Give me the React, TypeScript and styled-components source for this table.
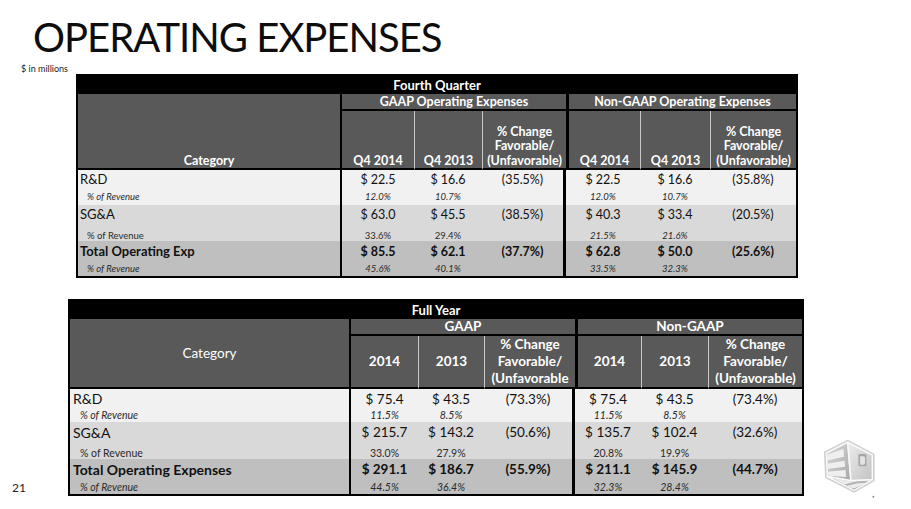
import React from "react";
import styled, { createGlobalStyle, css } from "styled-components";

const GlobalStyle = createGlobalStyle`
  html, body {
    margin: 0;
    padding: 0;
    background: #ffffff;
  }
  body {
    font-family: Lato, "Open Sans", "Liberation Sans", sans-serif;
    color: #111111;
  }
`;

type Tone = "light" | "mid" | "dark";

interface RowData {
  label: string;
  bold?: boolean;
  tone: Tone;
  values: string[]; // 6 values: gaap a, b, pct, non-gaap a, b, pct
  sub: string[]; // 4 values
  subItalic: [boolean, boolean]; // gaap / non-gaap
  labelItalic: boolean;
  heights: [number, number];
  subAlign?: "middle" | "bottom";
}

interface TableData {
  band: string;
  groups: [string, string];
  cols: React.ReactNode[];
  catBold: boolean;
  headAlign: "bottom" | "middle";
  headSize: number;
  headLine: number;
  widths: number[];
  headHeight: number;
  rows: RowData[];
  labelPad: number;
  subIndent: number;
  mainSize: number;
  subSize: number;
}

const pctHead = (close: boolean) => (
  <>
    % Change
    <br />
    Favorable/
    <br />
    (Unfavorable{close ? ")" : ""}
  </>
);

const quarter: TableData = {
  band: "Fourth Quarter",
  groups: ["GAAP Operating Expenses", "Non-GAAP Operating Expenses"],
  cols: ["Q4 2014", "Q4 2013", pctHead(true), "Q4 2014", "Q4 2013", pctHead(true)],
  catBold: true,
  headAlign: "bottom",
  headSize: 12.5,
  headLine: 14.5,
  widths: [264, 72, 68, 84, 74, 70, 86],
  headHeight: 59,
  labelPad: 2,
  subIndent: 9,
  mainSize: 12.5,
  subSize: 9.5,
  rows: [
    {
      label: "R&D",
      tone: "light",
      values: ["$ 22.5", "$ 16.6", "(35.5%)", "$ 22.5", "$ 16.6", "(35.8%)"],
      sub: ["12.0%", "10.7%", "12.0%", "10.7%"],
      subItalic: [true, true],
      labelItalic: true,
      heights: [18, 17],
    },
    {
      label: "SG&A",
      tone: "mid",
      values: ["$ 63.0", "$ 45.5", "(38.5%)", "$ 40.3", "$ 33.4", "(20.5%)"],
      sub: ["33.6%", "29.4%", "21.5%", "21.6%"],
      subItalic: [false, true],
      labelItalic: false,
      heights: [18, 18],
      subAlign: "bottom",
    },
    {
      label: "Total Operating Exp",
      bold: true,
      tone: "dark",
      values: ["$ 85.5", "$ 62.1", "(37.7%)", "$ 62.8", "$ 50.0", "(25.6%)"],
      sub: ["45.6%", "40.1%", "33.5%", "32.3%"],
      subItalic: [true, true],
      labelItalic: true,
      heights: [20, 15],
    },
  ],
};

const fullYear: TableData = {
  band: "Full Year",
  groups: ["GAAP", "Non-GAAP"],
  cols: ["2014", "2013", pctHead(false), "2014", "2013", pctHead(true)],
  catBold: false,
  headAlign: "middle",
  headSize: 13.5,
  headLine: 17,
  widths: [281, 67, 66, 91, 66, 67, 94],
  headHeight: 53,
  labelPad: 3,
  subIndent: 10,
  mainSize: 13.5,
  subSize: 10.5,
  rows: [
    {
      label: "R&D",
      tone: "light",
      values: ["$ 75.4", "$ 43.5", "(73.3%)", "$ 75.4", "$ 43.5", "(73.4%)"],
      sub: ["11.5%", "8.5%", "11.5%", "8.5%"],
      subItalic: [true, true],
      labelItalic: true,
      heights: [19, 14],
    },
    {
      label: "SG&A",
      tone: "mid",
      values: ["$ 215.7", "$ 143.2", "(50.6%)", "$ 135.7", "$ 102.4", "(32.6%)"],
      sub: ["33.0%", "27.9%", "20.8%", "19.9%"],
      subItalic: [false, false],
      labelItalic: false,
      heights: [20, 17],
      subAlign: "bottom",
    },
    {
      label: "Total Operating Expenses",
      bold: true,
      tone: "dark",
      values: ["$ 291.1", "$ 186.7", "(55.9%)", "$ 211.1", "$ 145.9", "(44.7%)"],
      sub: ["44.5%", "36.4%", "32.3%", "28.4%"],
      subItalic: [true, true],
      labelItalic: true,
      heights: [20, 15],
    },
  ],
};

const toneColor: Record<Tone, string> = {
  light: "#f1f1f1",
  mid: "#d9d9d9",
  dark: "#bfbfbf",
};

export default function App() {
  return (
    <Page>
      <GlobalStyle />
      <Title>OPERATING EXPENSES</Title>
      <Units>$ in millions</Units>
      <QuarterWrap>
        <ExpenseTable data={quarter} />
      </QuarterWrap>
      <BottomRow>
        <PageNum>21</PageNum>
        <ExpenseTable data={fullYear} />
        <Logo />
      </BottomRow>
    </Page>
  );
}

function ExpenseTable({ data }: { data: TableData }) {
  const total = data.widths.reduce((a, b) => a + b, 0);
  return (
    <Grid style={{ width: total }}>
      <colgroup>
        {data.widths.map((w, i) => (
          <col key={i} style={{ width: w }} />
        ))}
      </colgroup>
      <thead>
        <tr>
          <Band colSpan={7}>{data.band}</Band>
        </tr>
        <tr>
          <CatHead
            rowSpan={2}
            $bold={data.catBold}
            $align={data.headAlign}
            $size={data.headSize}
            $line={data.headLine}
          >
            Category
          </CatHead>
          <GroupHead colSpan={3} $size={data.headSize} $line={data.headLine}>
            {data.groups[0]}
          </GroupHead>
          <GroupHead colSpan={3} $split $size={data.headSize} $line={data.headLine}>
            {data.groups[1]}
          </GroupHead>
        </tr>
        <tr style={{ height: data.headHeight }}>
          {data.cols.map((c, i) => (
            <ColHead
              key={i}
              $align={data.headAlign}
              $size={data.headSize}
              $line={data.headLine}
              $sep={i === 0 ? "none" : i === 3 ? "dark" : "light"}
            >
              {c}
            </ColHead>
          ))}
        </tr>
      </thead>
      <tbody>
        {data.rows.map((r) => (
          <React.Fragment key={r.label}>
            <tr style={{ height: r.heights[0] }}>
              <Label $tone={r.tone} $bold={r.bold} $pad={data.labelPad} $size={data.mainSize}>
                {r.label}
              </Label>
              {r.values.map((v, i) => (
                <Value
                  key={i}
                  $tone={r.tone}
                  $bold={r.bold}
                  $size={data.mainSize}
                  $split={i === 2}
                >
                  {v}
                </Value>
              ))}
            </tr>
            <tr style={{ height: r.heights[1] }}>
              <SubLabel
                $tone={r.tone}
                $italic={r.labelItalic}
                $indent={data.subIndent}
                $size={data.subSize}
                $valign={r.subAlign ?? "middle"}
              >
                % of Revenue
              </SubLabel>
              {[0, 1, -1, 2, 3, -1].map((si, i) => (
                <SubValue
                  key={i}
                  $tone={r.tone}
                  $italic={r.subItalic[i < 3 ? 0 : 1]}
                  $size={data.subSize}
                  $split={i === 2}
                  $valign={r.subAlign ?? "middle"}
                >
                  {si >= 0 ? r.sub[si] : ""}
                </SubValue>
              ))}
            </tr>
          </React.Fragment>
        ))}
      </tbody>
    </Grid>
  );
}

// 3D Systems style cube: "3" on the left face, "D" on the right, "S" stripes below
function Logo() {
  return (
    <LogoBox>
      <svg width="62" height="62" viewBox="0 0 58 58">
        <defs>
          <linearGradient id="lf" x1="0" y1="0" x2="1" y2="1">
            <stop offset="0" stopColor="#dadada" />
            <stop offset="1" stopColor="#a9a9a9" />
          </linearGradient>
          <linearGradient id="rf" x1="0" y1="0" x2="1" y2="1">
            <stop offset="0" stopColor="#ededed" />
            <stop offset="1" stopColor="#c2c2c2" />
          </linearGradient>
          <linearGradient id="bf" x1="0" y1="0" x2="0" y2="1">
            <stop offset="0" stopColor="#c4c4c4" />
            <stop offset="1" stopColor="#9c9c9c" />
          </linearGradient>
        </defs>
        {/* soft outline */}
        <path
          d="M25 3 L49 15.5 L49 39.5 L31 50 L5 36.5 L4 13.5 Z"
          fill="none"
          stroke="#cfcfcf"
          strokeWidth="2.4"
          strokeLinejoin="round"
        />
        {/* left face */}
        <path
          d="M25 4 L28 40 L6 36 L5 14 Z"
          fill="url(#lf)"
          stroke="#fafafa"
          strokeWidth="1.4"
          strokeLinejoin="round"
        />
        <path d="M5.5 16 L21 10 L21.6 17.5 L5.5 21 Z" fill="#efefef" />
        <path d="M5.5 24 L22 21.2 L22.5 27 L5.5 29 Z" fill="#efefef" />
        <path d="M5.5 31.5 L23 30 L23.4 36.5 L6 35 Z" fill="#efefef" />
        {/* right face */}
        <path
          d="M25 4 L48 16 L48 39 L28 40 Z"
          fill="url(#rf)"
          stroke="#fafafa"
          strokeWidth="1.4"
          strokeLinejoin="round"
        />
        <rect x="35" y="15" width="7.5" height="11.5" rx="1.2" fill="#a6a6a6" />
        <path
          d="M36.6 17 L39.6 17 Q41.2 17 41.2 19 L41.2 23.5 Q41.2 25 39.6 25 L36.6 25 Z"
          fill="#e4e4e4"
        />
        {/* bottom face */}
        <path
          d="M6 36 L28 40 L48 39 L31 49 Z"
          fill="url(#bf)"
          stroke="#fafafa"
          strokeWidth="1.4"
          strokeLinejoin="round"
        />
        <path d="M12 37.6 L27 40.4 L35 40 L22 43.6 Z" fill="#ebebeb" />
        <path d="M22 45.2 L34 42.4 L43 41.8 L31 47.2 Z" fill="#ebebeb" />
        <circle cx="49" cy="55" r="0.9" fill="#8a8a8a" />
      </svg>
    </LogoBox>
  );
}

const Page = styled.div`
  position: relative;
  width: 911px;
  height: 509px;
  overflow: hidden;
  background: #ffffff;
`;

const Title = styled.h1`
  margin: 0;
  padding: 13px 0 0 33px;
  font-family: Lato, "Open Sans", sans-serif;
  font-weight: 400;
  font-size: 40px;
  line-height: 48px;
  letter-spacing: -1px;
  color: #0d0d0d;
`;

const Units = styled.div`
  margin: 3px 0 0 21px;
  font-size: 9px;
  line-height: 10px;
  color: #222222;
`;

const QuarterWrap = styled.div`
  padding-left: 76px;
`;

const BottomRow = styled.div`
  display: flex;
  align-items: flex-end;
  margin-top: 21px;
`;

const PageNum = styled.div`
  width: 68px;
  box-sizing: border-box;
  padding: 0 0 1px 12px;
  font-size: 12px;
  line-height: 14px;
  color: #222222;
`;

const LogoBox = styled.div`
  margin: 0 0 -4px 17px;
  display: flex;
`;

const Grid = styled.table`
  table-layout: fixed;
  border-collapse: separate;
  border-spacing: 0;
  border: 2px solid #000000;
  box-sizing: border-box;
`;

const headText = css<{ $size?: number; $line?: number }>`
  color: #ffffff;
  font-weight: 700;
  font-size: ${(p) => p.$size ?? 13}px;
  line-height: ${(p) => p.$line ?? 15}px;
  text-align: center;
  padding: 0;
`;

const Band = styled.th`
  ${headText};
  background: #000000;
  height: 18px;
  font-size: 13px;
`;

const CatHead = styled.th<{ $bold: boolean; $align: string; $size: number; $line: number }>`
  ${headText};
  background: #595959;
  font-weight: ${(p) => (p.$bold ? 700 : 400)};
  vertical-align: ${(p) => p.$align};
  border-right: 2px solid #000000;
  border-bottom: 2px solid #000000;
`;

const GroupHead = styled.th<{ $split?: boolean; $size: number; $line: number }>`
  ${headText};
  background: #595959;
  height: 15px;
  line-height: 15px;
  border-bottom: 2px solid #000000;
  border-left: ${(p) => (p.$split ? "3px solid #000000" : "none")};
`;

const ColHead = styled.th<{
  $align: string;
  $sep: "none" | "light" | "dark";
  $size: number;
  $line: number;
}>`
  ${headText};
  background: #595959;
  vertical-align: ${(p) => p.$align};
  border-bottom: 2px solid #000000;
  border-left: ${(p) =>
    p.$sep === "dark" ? "3px solid #000000" : p.$sep === "light" ? "1px solid #c8c8c8" : "none"};
`;

const cellBase = css<{ $tone: Tone }>`
  background: ${(p) => toneColor[p.$tone]};
  padding: 0;
  white-space: nowrap;
`;

const Label = styled.td<{ $tone: Tone; $bold?: boolean; $pad: number; $size: number }>`
  ${cellBase};
  padding-left: ${(p) => p.$pad}px;
  font-size: ${(p) => p.$size + 0.5}px;
  font-weight: ${(p) => (p.$bold ? 700 : 400)};
  border-right: 2px solid #000000;
`;

const Value = styled.td<{ $tone: Tone; $bold?: boolean; $size: number; $split: boolean }>`
  ${cellBase};
  text-align: center;
  font-size: ${(p) => p.$size}px;
  font-weight: ${(p) => (p.$bold ? 700 : 400)};
  border-right: ${(p) => (p.$split ? "3px solid #000000" : "none")};
`;

const SubLabel = styled.td<{
  $tone: Tone;
  $italic: boolean;
  $indent: number;
  $size: number;
  $valign: string;
}>`
  ${cellBase};
  padding-left: ${(p) => p.$indent}px;
  font-size: ${(p) => p.$size}px;
  font-style: ${(p) => (p.$italic ? "italic" : "normal")};
  vertical-align: ${(p) => p.$valign};
  color: #2a2a2a;
  border-right: 2px solid #000000;
`;

const SubValue = styled.td<{
  $tone: Tone;
  $italic: boolean;
  $size: number;
  $split: boolean;
  $valign: string;
}>`
  ${cellBase};
  text-align: center;
  font-size: ${(p) => p.$size}px;
  font-style: ${(p) => (p.$italic ? "italic" : "normal")};
  vertical-align: ${(p) => p.$valign};
  color: #2a2a2a;
  border-right: ${(p) => (p.$split ? "3px solid #000000" : "none")};
`;
